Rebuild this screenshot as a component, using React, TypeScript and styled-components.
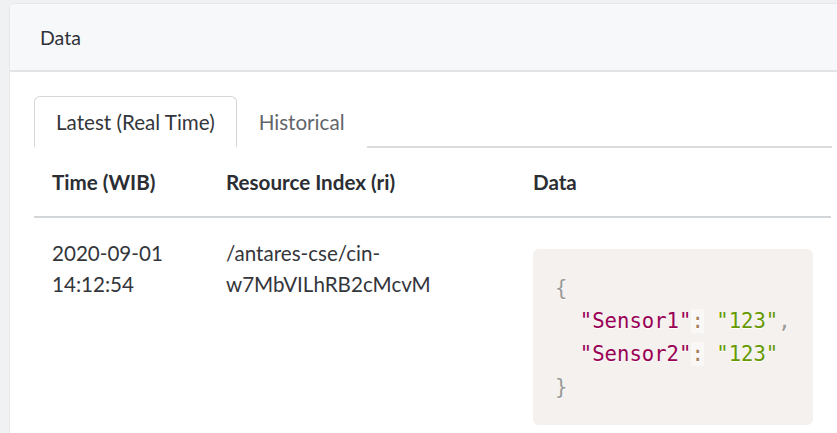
import React from "react";
import styled, { createGlobalStyle } from "styled-components";

const GlobalStyle = createGlobalStyle`
  html, body {
    margin: 0;
    padding: 0;
    background: #f0f1f3;
    overflow: hidden;
  }
  body {
    font-family: Lato, "Open Sans", Arial, sans-serif;
    color: #333;
  }
`;

const Page = styled.div`
  padding: 3px 0 0 9px;
  width: 900px;
`;

const Card = styled.div`
  width: 846px;
  background: #fff;
  border: 1px solid #e6e8ea;
  border-radius: 6px;
  overflow: hidden;
`;

const CardHeader = styled.div`
  height: 68px;
  background: #f7f8fa;
  border-bottom: 2px solid #e3e4e6;
  display: flex;
  align-items: center;
  padding: 0 30px;
  font-size: 19.5px;
  color: #2f3238;
  box-sizing: border-box;
`;

const CardBody = styled.div`
  padding: 24px 24px 0 24px;
`;

const Tabs = styled.div`
  display: flex;
  border-bottom: 2px solid #dcdcdc;
`;

const Tab = styled.div<{ active?: boolean }>`
  height: 52px;
  box-sizing: border-box;
  display: flex;
  align-items: center;
  padding: 0 21px;
  margin-bottom: -2px;
  font-size: 20.6px;
  color: ${({ active }) => (active ? "#33363b" : "#62656a")};
  background: #fff;
  border: 1px solid ${({ active }) => (active ? "#d6d6d6" : "transparent")};
  border-bottom: 2px solid ${({ active }) => (active ? "#fff" : "transparent")};
  border-radius: 6px 6px 0 0;
`;

const Grid = styled.div`
  display: grid;
  grid-template-columns: 174px 307px 316px;
`;

const HeadCell = styled.div`
  padding: 20px 18px 20px;
  line-height: 28px;
  font-size: 20.6px;
  font-weight: 700;
  color: #2b2e33;
  border-bottom: 2px solid #d3d6d9;
`;

const Cell = styled.div`
  padding: 20px 18px;
  line-height: 31px;
  font-size: 20.6px;
  color: #33363b;
`;

const CodeBlock = styled.pre`
  margin: 11px 0 0;
  width: 280px;
  box-sizing: border-box;
  padding: 23px 22px 21px;
  background: #f4f1ee;
  border-radius: 6px;
  font-family: "DejaVu Sans Mono", "Liberation Mono", monospace;
  font-size: 20.6px;
  line-height: 33px;
  color: #333;
  text-shadow: 0 1px #fff;
`;

const Punct = styled.span`
  color: #999;
`;

const Key = styled.span`
  color: #905;
`;

const Op = styled.span`
  color: #a67f59;
  background: hsla(0, 0%, 100%, 0.5);
`;

const Str = styled.span`
  color: #690;
`;

const rows = [
  {
    time: ["2020-09-01", "14:12:54"],
    ri: ["/antares-cse/cin-", "w7MbVILhRB2cMcvM"],
    data: [
      { key: "Sensor1", value: "123" },
      { key: "Sensor2", value: "123" },
    ],
  },
];

export default function App() {
  return (
    <>
      <GlobalStyle />
      <Page>
        <Card>
          <CardHeader>Data</CardHeader>
          <CardBody>
            <Tabs>
              <Tab active>Latest (Real Time)</Tab>
              <Tab>Historical</Tab>
            </Tabs>
            <Grid>
              <HeadCell>Time (WIB)</HeadCell>
              <HeadCell>Resource Index (ri)</HeadCell>
              <HeadCell>Data</HeadCell>
              {rows.map((r, i) => (
                <React.Fragment key={i}>
                  <Cell>
                    {r.time[0]}
                    <br />
                    {r.time[1]}
                  </Cell>
                  <Cell>
                    {r.ri[0]}
                    <br />
                    {r.ri[1]}
                  </Cell>
                  <Cell>
                    <CodeBlock>
                      <Punct>{"{"}</Punct>
                      {"\n"}
                      {r.data.map((d, j) => (
                        <React.Fragment key={d.key}>
                          {"  "}
                          <Key>"{d.key}"</Key>
                          <Op>:</Op> <Str>"{d.value}"</Str>
                          {j < r.data.length - 1 ? <Punct>,</Punct> : null}
                          {"\n"}
                        </React.Fragment>
                      ))}
                      <Punct>{"}"}</Punct>
                    </CodeBlock>
                  </Cell>
                </React.Fragment>
              ))}
            </Grid>
          </CardBody>
        </Card>
      </Page>
    </>
  );
}
